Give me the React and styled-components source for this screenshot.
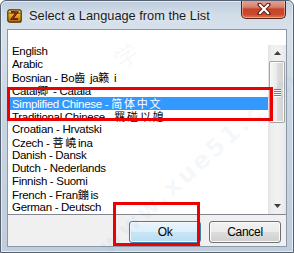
import React from 'react';
import styled, { createGlobalStyle } from 'styled-components';

const Global = createGlobalStyle`
  html, body { margin: 0; padding: 0; background: #ffffff; }
  body {
    width: 294px; height: 253px; overflow: hidden;
    font-family: "Liberation Sans", Arial, "Noto Sans CJK SC", sans-serif;
  }
`;

const Window = styled.div`
  position: relative;
  box-sizing: border-box;
  width: 294px;
  height: 253px;
  border: 1px solid #55616f;
  border-radius: 6px 6px 0 0;
  background: linear-gradient(#bccbdc 0px, #d2dde9 14px, #d7e1ec 28px, #c9d5e3 120px, #bfcddc 253px);
  box-shadow: inset 0 0 0 1px #e4ebf3;
  padding: 0 6px 5px 6px;
  display: flex;
  flex-direction: column;
  overflow: hidden;
`;

const TitleBar = styled.div`
  height: 28px;
  flex: none;
  display: flex;
  align-items: center;
`;

const AppIcon = styled.svg`
  width: 15px;
  height: 15px;
  flex: none;
  margin-top: 1px;
`;

const Title = styled.div`
  margin-left: 7px;
  font-size: 12.8px;
  color: #1b1b1b;
  text-shadow: 0 0 6px rgba(255, 255, 255, 0.9);
  white-space: nowrap;
`;

const CloseButton = styled.div`
  margin-left: auto;
  margin-right: 1px;
  align-self: flex-start;
  margin-top: -1px;
  width: 45px;
  height: 19px;
  box-sizing: border-box;
  border: 1px solid #5b2218;
  border-top: none;
  border-radius: 0 0 5px 5px;
  background: linear-gradient(#e8a697 0%, #d7806c 40%, #c7432a 50%, #c94a2c 80%, #dc7a52 100%);
  box-shadow: inset 0 0 0 1px rgba(255, 210, 200, 0.5);
  display: flex;
  align-items: center;
  justify-content: center;
`;

const Client = styled.div`
  flex: 1;
  box-sizing: border-box;
  border: 1px solid #8a98a8;
  background: #f0f0f0;
  display: flex;
  flex-direction: column;
`;

const ListBox = styled.div`
  background: #ffffff;
  border-bottom: 1px solid #828790;
  display: flex;
  flex-direction: column;
`;

const ListHeader = styled.div`
  height: 15px;
`;

const ListBody = styled.div`
  display: flex;
  height: 169px;
`;

const Items = styled.div`
  flex: 1;
  display: flex;
  flex-direction: column;
`;

const Item = styled.div`
  height: 13px;
  line-height: 13px;
  padding-left: 4px;
  font-size: 11.5px;
  letter-spacing: -0.3px;
  white-space: nowrap;
  overflow: hidden;
  color: ${p => (p.$selected ? '#ffffff' : '#000000')};
  background: ${p => (p.$selected ? '#3399ff' : 'transparent')};
`;

const Cjk = styled.span`
  font-family: "Noto Sans CJK SC", sans-serif;
  font-size: 11px;
  line-height: 13px;
  letter-spacing: 1.8px;
`;

const ScrollBar = styled.div`
  width: 18px;
  flex: none;
  display: flex;
  flex-direction: column;
  background: linear-gradient(to right, #e2e2e2 0px, #ededed 3px, #f2f2f2 9px, #ededed 15px, #e6e6e6 18px);
`;

const ArrowButton = styled.div`
  height: 16px;
  flex: none;
  display: flex;
  align-items: center;
  justify-content: center;
`;

const Track = styled.div`
  flex: 1;
  display: flex;
  flex-direction: column;
`;

const Thumb = styled.div`
  margin: 0 1px;
  height: 62px;
  box-sizing: border-box;
  border: 1px solid #a3a3a3;
  border-radius: 2px;
  background: linear-gradient(to right, #f6f6f6 0%, #ececec 45%, #dcdcdc 55%, #d2d2d2 100%);
  box-shadow: inset 0 0 0 1px #fbfbfb;
  display: flex;
  flex-direction: column;
  align-items: center;
  justify-content: center;
  gap: 1px;
`;

const Grip = styled.div`
  width: 7px;
  height: 1px;
  background: #7a7a7a;
  box-shadow: 0 1px 0 #ffffff;
`;

const ButtonRow = styled.div`
  display: flex;
  justify-content: flex-end;
  gap: 8px;
  padding: 6px 5px 0 0;
`;

const Button = styled.div`
  width: 72px;
  height: 22px;
  box-sizing: border-box;
  border: 1px solid ${p => (p.$default ? '#3c7fb1' : '#707070')};
  border-radius: 3px;
  background: ${p =>
    p.$default
      ? 'linear-gradient(#eaf5fc 0%, #dcefFa 50%, #c9e6f7 51%, #b9dcf2 100%)'
      : 'linear-gradient(#f2f2f2 0%, #ebebeb 50%, #dddddd 51%, #cfcfcf 100%)'};
  box-shadow: inset 0 0 0 1px ${p => (p.$default ? '#f4fbff' : '#fbfbfb')};
  display: flex;
  align-items: center;
  justify-content: center;
  font-size: 12px;
  letter-spacing: -0.3px;
  color: #000000;
`;

const Highlight = styled.div`
  position: absolute;
  box-sizing: border-box;
  border: 3px solid #ee0000;
  pointer-events: none;
`;

const Watermark = styled.div`
  position: absolute;
  left: 92px;
  top: 238px;
  transform: rotate(-42deg);
  transform-origin: left top;
  font-family: "DejaVu Sans", sans-serif;
  font-weight: bold;
  font-size: 24px;
  letter-spacing: 3px;
  color: rgba(110, 150, 205, 0.08);
  pointer-events: none;
  white-space: nowrap;
`;

const Stamp = styled.div`
  position: absolute;
  left: 112px;
  top: 36px;
  transform: rotate(-35deg);
  font-family: "Noto Sans CJK SC", sans-serif;
  font-size: 24px;
  color: rgba(110, 150, 205, 0.07);
  pointer-events: none;
`;

const languages = [
  'English',
  'Arabic',
  'Bosnian - Bo齒 ja籁 i',
  'Catal卿 - Catala',
  'Simplified Chinese - 简体中文',
  'Traditional Chinese - 羈碰以媳',
  'Croatian - Hrvatski',
  'Czech - 菩嶢ina',
  'Danish - Dansk',
  'Dutch - Nederlands',
  'Finnish - Suomi',
  'French - Fran鏰is',
  'German - Deutsch',
];

function renderLabel(text) {
  const parts = text.split(/([\u3400-\u9fff]+)/);
  return parts.map((part, i) =>
    /[\u3400-\u9fff]/.test(part) ? <Cjk key={i}>{part}</Cjk> : <React.Fragment key={i}>{part}</React.Fragment>
  );
}

const ChestIcon = () => (
  <AppIcon viewBox="0 0 15 15">
    <defs>
      <linearGradient id="gold" x1="0" y1="0" x2="0" y2="1">
        <stop offset="0" stopColor="#f6d65a" />
        <stop offset="0.5" stopColor="#e0a51c" />
        <stop offset="1" stopColor="#a86a08" />
      </linearGradient>
    </defs>
    <rect x="0.8" y="1.8" width="13.4" height="12.4" rx="2" fill="url(#gold)" stroke="#4a2e05" strokeWidth="1.2" />
    <path d="M1.5 5.2 H13.5" stroke="#6b4207" strokeWidth="0.9" />
    <path d="M4 4 L10 4.3 L5 10.8 L11 11" fill="none" stroke="#1c1208" strokeWidth="2" />
    <path d="M4 4 L10 4.3 L5 10.8 L11 11" fill="none" stroke="#d8261c" strokeWidth="1" />
  </AppIcon>
);

const CloseGlyph = () => (
  <svg width="14" height="12" viewBox="0 0 14 12">
    <path d="M2.5 1.5 L11.5 10.5 M11.5 1.5 L2.5 10.5" stroke="#5a1a10" strokeWidth="4" strokeLinecap="round" />
    <path d="M2.8 1.8 L11.2 10.2 M11.2 1.8 L2.8 10.2" stroke="#ffffff" strokeWidth="2.2" strokeLinecap="round" />
  </svg>
);

const Arrow = ({ down }) => (
  <svg width="7" height="4" viewBox="0 0 7 4">
    <path d={down ? 'M0 0 H7 L3.5 4 Z' : 'M0 4 H7 L3.5 0 Z'} fill="#404040" />
  </svg>
);

export default function App() {
  return (
    <>
      <Global />
      <Window>
        <TitleBar>
          <ChestIcon />
          <Title>Select a Language from the List</Title>
          <CloseButton>
            <CloseGlyph />
          </CloseButton>
        </TitleBar>
        <Client>
          <ListBox>
            <ListHeader />
            <ListBody>
              <Items>
                {languages.map((lang, i) => (
                  <Item key={lang} $selected={i === 4}>
                    {renderLabel(lang)}
                  </Item>
                ))}
              </Items>
              <ScrollBar>
                <ArrowButton>
                  <Arrow />
                </ArrowButton>
                <Track>
                  <Thumb>
                    <Grip />
                    <Grip />
                    <Grip />
                    <Grip />
                  </Thumb>
                </Track>
                <ArrowButton>
                  <Arrow down />
                </ArrowButton>
              </ScrollBar>
            </ListBody>
          </ListBox>
          <ButtonRow>
            <Button $default>Ok</Button>
            <Button>Cancel</Button>
          </ButtonRow>
        </Client>
        <Stamp>学</Stamp>
        <Watermark>www.xue51.com</Watermark>
        <Highlight style={{ left: 6, top: 86, width: 266, height: 34 }} />
        <Highlight style={{ left: 112, top: 201, width: 87, height: 44 }} />
      </Window>
    </>
  );
}
